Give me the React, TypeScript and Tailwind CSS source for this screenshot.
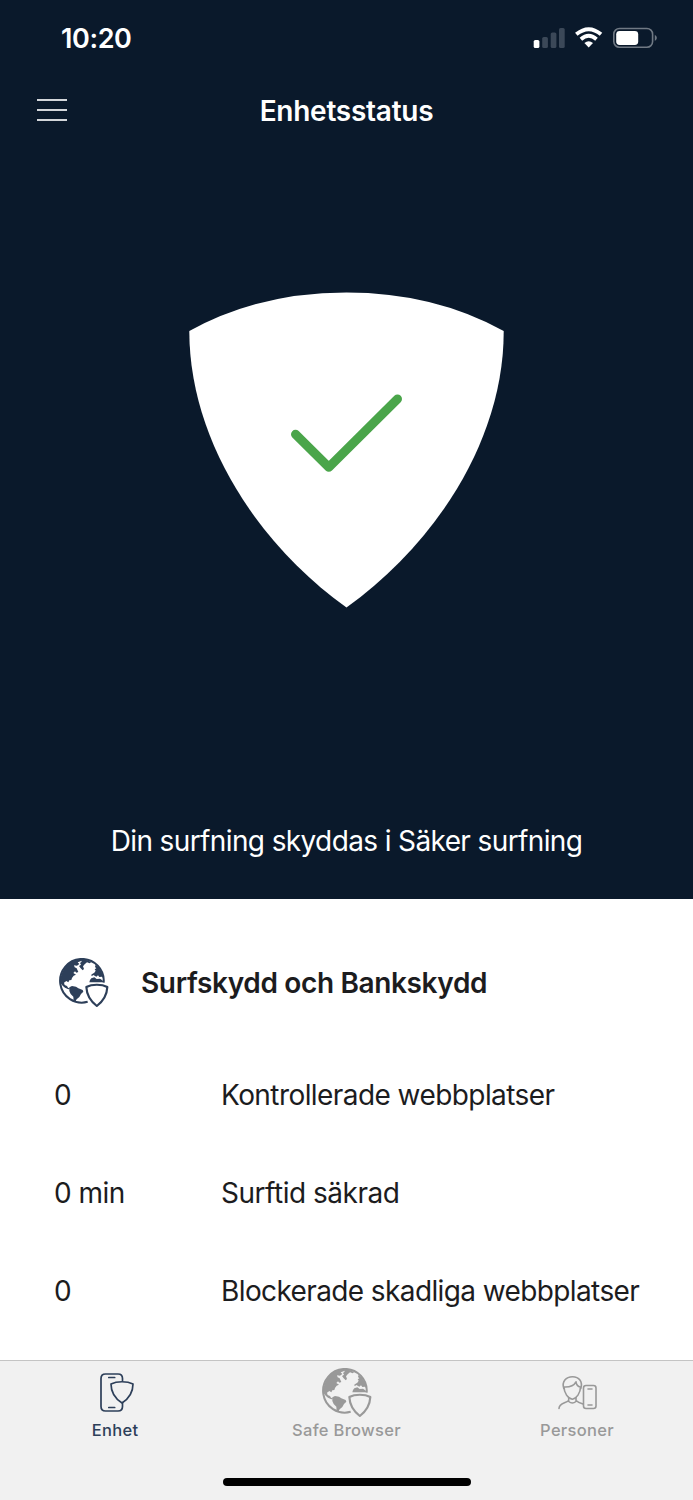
import React from "react";

function GlobeShield() {
  return (
    <svg width="50" height="50" viewBox="0 0 150 150" fill="none" className="block">
      <path d="M134 74A65.500 65.500 0 1 0 86 131.500" stroke="currentColor" strokeWidth="6" />
      <path
        fill="currentColor"
        d="M4 66C7 38 22 18 42 8L58 4L68 5L65 10L56 13L61 18L54 23L45 22L47 28L53 31L58 42L52 44L48 40L43 45L51 50L44 53L39 60L37 66L31 67L28 73L22 69L15 74L17 81L24 84L27 89L34 92L28 94L18 89L11 83L5 76Z"
      />
      <path fill="currentColor" d="M31 88L39 84L51 86L58 91L71 96L73 101L66 108L61 117L53 124L49 131L44 130L43 116L35 108L31 99Z" />
      <path fill="currentColor" d="M64 4L82 6L97 12L92 16L84 13L77 19L72 25L75 33L71 37L65 31L60 24L66 20L63 15L68 11Z" />
      <path
        fill="currentColor"
        d="M110 20C124 31 132 46 134 63L129 56L121 57L117 52L112 56L107 53L103 51L99 54L96 51L101 47L106 44L110 38L107 34L112 31L108 27Z"
      />
      <path fill="currentColor" d="M97 61L106 58L113 63L123 62L130 67L134 73L91 73L93 66Z" />
      <path d="M82 87C99 78 128 78 145 87C144 109 133 129 113.500 144C94 129 83 109 82 87Z" stroke="currentColor" strokeWidth="6.500" strokeLinejoin="round" />
    </svg>
  );
}

function PhoneShield() {
  return (
    <svg width="36" height="42" viewBox="0 0 36 42" fill="none" stroke="currentColor" strokeWidth="1.7" strokeLinecap="round" strokeLinejoin="round" className="block">
      <path d="M23.500 8.500V6.500Q23.500 2 19 2H6.500Q2 2 2 6.500V34.500Q2 39 6.500 39H19Q23.500 39 23.500 34.500V30.500" />
      <path d="M9.800 5.500H15.700M9.800 35.500H15.700" />
      <path d="M12 12C18 9 28 9 34 12C34 20 30 26.500 23 31C16 26.500 12 20 12 12Z" />
    </svg>
  );
}

function PersonPhone() {
  return (
    <svg width="40" height="36" viewBox="0 0 40 36" fill="none" stroke="currentColor" strokeWidth="1.6" strokeLinecap="round" strokeLinejoin="round" className="block">
      <rect x="25.500" y="10.500" width="12.500" height="23" rx="2.500" />
      <path d="M30 14H34M30 30H34" />
      <path d="M5.800 13.500C3.500 6.500 8 1.800 14.500 1.800C21 1.800 25 6.500 22.800 13.500" />
      <path d="M6 12C11 12.300 16 10.500 18 6.800C18.300 9.500 20 11.500 22.500 12C22.500 18 18.500 23.500 14.400 24.200C10 23.500 6 18 6 12Z" />
      <path d="M10.700 22.500V26.500Q14.300 29.500 18 26.500V22.500M10.700 25.500C7.500 28.500 1.200 28 1 33.500M18 25.500Q20 27.500 25 29" />
    </svg>
  );
}

function StatusIcons() {
  return (
    <svg width="124" height="24" viewBox="0 0 124 24" fill="none" className="block">
      <rect x="0.700" y="14" width="5.700" height="8" rx="1.600" fill="white" />
      <g fill="#3b4858">
        <rect x="9.200" y="11" width="5.700" height="11" rx="1.600" />
        <rect x="17.700" y="6.500" width="5.700" height="15.500" rx="1.600" />
        <rect x="26" y="2" width="5.700" height="20" rx="1.600" />
      </g>
      <g stroke="white" strokeWidth="3.900">
        <path d="M43.300 8.300Q55.700-2 68 8.300" />
        <path d="M47.900 13.200Q55.700 6.500 63.500 13.200" />
      </g>
      <path d="M51.400 17.100Q55.700 13.500 60 17.100L55.700 21.600Z" fill="white" />
      <rect x="80.800" y="2.500" width="38.800" height="18.800" rx="5.700" stroke="#707984" strokeWidth="1.600" />
      <rect x="83.200" y="4.900" width="22" height="14" rx="3.400" fill="white" />
      <path d="M121.800 8.700Q126 11.900 121.800 15.100Z" fill="#707984" />
    </svg>
  );
}

const stats = [
  { value: "0", label: "Kontrollerade webbplatser", tracking: "tracking-[-0.57px]" },
  { value: "0 min", label: "Surftid säkrad", tracking: "tracking-[-0.48px]" },
  { value: "0", label: "Blockerade skadliga webbplatser", tracking: "tracking-[-0.61px]" },
];

export default function App() {
  return (
    <div className="flex h-[1500px] w-[693px] flex-col bg-white font-['Inter','Liberation_Sans',sans-serif] text-[#1c1c1e]">
      <section className="flex h-[899px] flex-col bg-[#0a192b] text-white">
        <div className="flex h-[76px] items-center justify-between pr-[36px] pl-[61px]">
          <span className="pt-[2px] text-[27px] font-semibold tracking-[-0.4px]">10:20</span>
          <StatusIcons />
        </div>
        <header className="grid h-[70px] grid-cols-[1fr_auto_1fr] items-center px-[37px]">
          <button aria-label="Meny" className="mb-[3px] flex w-[30px] flex-col gap-[8px]">
            <span className="h-[2px] bg-[#d3d6da]" />
            <span className="h-[2px] bg-[#d3d6da]" />
            <span className="h-[2px] bg-[#d3d6da]" />
          </button>
          <h1 className="text-[28px] font-semibold tracking-[-0.25px]">Enhetsstatus</h1>
        </header>
        <div className="flex justify-center pt-[146px]">
          <svg width="315" height="316" viewBox="0 0 315 316" fill="none">
            <path fill="white" d="M0.300 39Q70 0.500 157.500 0.500T314.700 39C315 145 249 250 157.500 315.500C66 250 0.300 145 0.300 39Z" />
            <path d="M106.500 142.300L139.800 175.300L208.500 107" stroke="#4aa54a" strokeWidth="9" strokeLinecap="round" strokeLinejoin="round" />
          </svg>
        </div>
        <p className="mt-auto mb-[38px] text-center text-[28px] leading-[40px] font-normal tracking-[-0.62px]">
          Din surfning skyddas i Säker surfning
        </p>
      </section>
      <main className="h-[461px]">
        <div className="flex h-[147px] items-center gap-[32px] pt-[20px] pl-[59px]">
          <span className="text-[#2d3f59]">
            <GlobeShield />
          </span>
          <h2 className="text-[28px] font-semibold tracking-[-0.35px]">Surfskydd och Bankskydd</h2>
        </div>
        {stats.map((s) => (
          <div key={s.label} className="grid h-[98px] grid-cols-[167px_1fr] items-center pl-[54px] text-[28px] whitespace-nowrap">
            <span className="tracking-[-0.5px]">{s.value}</span>
            <span className={s.tracking}>{s.label}</span>
          </div>
        ))}
      </main>
      <footer className="flex h-[140px] flex-col border-t border-[#c4c4c4] bg-[#f1f1f1]">
        <nav className="grid h-[82px] grid-cols-3 text-[16.500px] leading-[22px] font-medium tracking-[0.3px] text-[#999999]">
          <div className="flex flex-col items-center text-[#2d3f59]">
            <span className="flex h-[58px] items-center pt-[5px] pl-[2px]">
              <PhoneShield />
            </span>
            <span className="pr-[1px]">Enhet</span>
          </div>
          <div className="flex flex-col items-center">
            <span className="flex h-[58px] items-center pt-[5px] pl-[1px]">
              <GlobeShield />
            </span>
            <span>Safe Browser</span>
          </div>
          <div className="flex flex-col items-center">
            <span className="flex h-[58px] items-center pt-[5px]">
              <PersonPhone />
            </span>
            <span className="pr-[1px]">Personer</span>
          </div>
        </nav>
        <div className="mx-auto mt-[35px] h-[8px] w-[248px] rounded-full bg-black" />
      </footer>
    </div>
  );
}
